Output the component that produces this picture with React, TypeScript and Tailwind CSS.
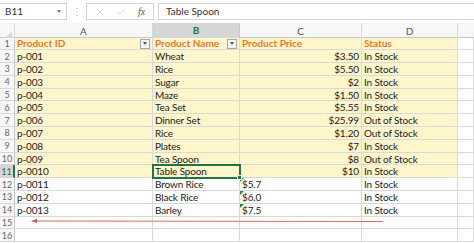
import { X, Check } from 'lucide-react'

const rows = [
  { id: 'p-001', name: 'Wheat', price: '$3.50', status: 'In Stock' },
  { id: 'p-002', name: 'Rice', price: '$5.50', status: 'In Stock' },
  { id: 'p-003', name: 'Sugar', price: '$2', status: 'In Stock' },
  { id: 'p-004', name: 'Maze', price: '$1.50', status: 'In Stock' },
  { id: 'p-005', name: 'Tea Set', price: '$5.55', status: 'In Stock' },
  { id: 'p-006', name: 'Dinner Set', price: '$25.99', status: 'Out of Stock' },
  { id: 'p-007', name: 'Rice', price: '$1.20', status: 'Out of Stock' },
  { id: 'p-008', name: 'Plates', price: '$7', status: 'In Stock' },
  { id: 'p-009', name: 'Tea Spoon', price: '$8', status: 'Out of Stock' },
  { id: 'p-0010', name: 'Table Spoon', price: '$10', status: 'In Stock' },
  { id: 'p-0011', name: 'Brown Rice', price: '$5.7', status: 'In Stock', text: true },
  { id: 'p-0012', name: 'Black Rice', price: '$6.0', status: 'In Stock', text: true },
  { id: 'p-0013', name: 'Barley', price: '$7.5', status: 'In Stock', text: true },
]

const cols = 'grid grid-cols-[15px_138px_87px_122px_96px_1fr]'
const cell = 'h-[12.8px] border-r border-b border-[#d9d9d9] flex items-center px-[2px] text-[10px] text-[#222] leading-none whitespace-nowrap overflow-visible relative tracking-[-0.15px]'

function Dropdown() {
  return (
    <span className="absolute right-[2px] top-[1px] w-[10px] h-[10px] border border-[#a6a6a6] bg-[#f4f4f4] flex items-center justify-center">
      <span className="w-0 h-0 border-l-[2.5px] border-r-[2.5px] border-t-[3px] border-l-transparent border-r-transparent border-t-[#555]" />
    </span>
  )
}

function RowNum({ n, active }: { n: number; active?: boolean }) {
  return (
    <div
      className={`h-[12.8px] border-b border-[#d9d9d9] flex items-center justify-center text-[9px] leading-none ${
        active ? 'bg-[#d6d6d6] text-[#217346] border-r-2 border-r-[#217346]' : 'bg-[#f7f7f7] text-[#666] border-r border-r-[#c6c6c6]'
      }`}
    >
      {n}
    </div>
  )
}

export default function App() {
  return (
    <div className="w-[474px] h-[243px] bg-white overflow-hidden relative font-['Lato','Liberation_Sans',sans-serif]">
      {/* formula bar */}
      <div className="h-[22px] flex items-center pt-[1px]">
        <div className="w-[67px] h-[17px] border border-[#d4d4d4] border-l-0 flex items-center justify-between pl-[5px] pr-[5px] text-[10px] text-[#333]">
          <span>B11</span>
          <span className="w-0 h-0 border-l-[2.5px] border-r-[2.5px] border-t-[3px] border-l-transparent border-r-transparent border-t-[#777]" />
        </div>
        <div className="w-[19px] flex justify-center text-[10px] text-[#bbb]">⋮</div>
        <div className="w-[68px] h-[17px] border border-[#d4d4d4] flex items-center justify-around px-[2px]">
          <X size={10} strokeWidth={1.5} className="text-[#c4c4c4]" />
          <Check size={10} strokeWidth={1.5} className="text-[#c4c4c4]" />
          <span className="text-[10px] italic text-[#555] font-['Liberation_Serif',serif]">fx</span>
        </div>
        <div className="flex-1 h-[17px] ml-[4px] border border-[#d4d4d4] border-r-0 flex items-center pl-[7px] text-[10px] text-[#333]">
          Table Spoon
        </div>
      </div>
      <div className="h-[1px]" />

      {/* column headers */}
      <div className={`${cols} h-[14.5px] bg-[#f7f7f7] border-b border-[#c6c6c6]`}>
        <div className="border-r border-[#d9d9d9] relative">
          <svg className="absolute right-[2px] bottom-[2px]" width="7" height="7">
            <polygon points="7,0 7,7 0,7" fill="#d9d9d9" />
          </svg>
        </div>
        <div className="border-r border-[#d9d9d9] flex items-center justify-center text-[10px] text-[#555]">A</div>
        <div className="bg-[#d6d6d6] border-r border-[#c6c6c6] border-b-2 border-b-[#217346] flex items-center justify-center text-[10px] font-bold text-[#217346]">B</div>
        <div className="border-r border-[#d9d9d9] flex items-center justify-center text-[10px] text-[#555]">C</div>
        <div className="border-r border-[#d9d9d9] flex items-center justify-center text-[10px] text-[#555]">D</div>
        <div />
      </div>

      {/* row 1 headers */}
      <div className={cols}>
        <RowNum n={1} />
        <div className={`${cell} bg-[#fff6cc] font-bold text-[#e9782c]! tracking-normal!`}>
          Product ID
          <Dropdown />
        </div>
        <div className={`${cell} bg-[#fff6cc] font-bold text-[#e9782c]! tracking-normal!`}>
          Product Name
          <Dropdown />
        </div>
        <div className={`${cell} bg-[#fff6cc] font-bold text-[#e9782c]! tracking-normal!`}>Product Price</div>
        <div className={`${cell} bg-[#fff6cc] font-bold text-[#e9782c]! tracking-normal!`}>Status</div>
        <div className={cell} />
      </div>

      {rows.map((r, i) => {
        const n = i + 2
        const yellow = n <= 11 ? 'bg-[#fff6cc]' : ''
        const active = n === 11
        return (
          <div key={n} className={cols}>
            <RowNum n={n} active={active} />
            <div className={`${cell} ${yellow}`}>{r.id}</div>
            <div className={`${cell} ${yellow} ${active ? 'outline-2 outline-[#217346] -outline-offset-1 z-10' : ''}`}>
              {r.name}
              {active && (
                <span className="absolute right-[-3px] bottom-[-3px] w-[5px] h-[5px] bg-[#217346] border border-white z-20" />
              )}
            </div>
            <div className={`${cell} ${yellow} ${r.text ? 'justify-start' : 'justify-end'}`}>
              {r.text && (
                <span className="absolute left-0 top-0 w-0 h-0 border-t-[4px] border-r-[4px] border-t-[#1e8e3e] border-r-transparent" />
              )}
              {r.price}
            </div>
            <div className={`${cell} ${yellow}`}>{r.status}</div>
            <div className={cell} />
          </div>
        )
      })}

      {[15, 16].map((n) => (
        <div key={n} className={cols}>
          <RowNum n={n} />
          <div className={cell} />
          <div className={cell} />
          <div className={cell} />
          <div className={cell} />
          <div className={cell} />
        </div>
      ))}

      {/* red arrow annotation */}
      <svg className="absolute left-0 top-0 pointer-events-none" width="474" height="243">
        <line x1="36" y1="221" x2="383" y2="221.5" stroke="#e06666" strokeWidth="1" />
        <polygon points="31,221 37,219 37,223" fill="#d9534f" />
      </svg>
    </div>
  )
}
